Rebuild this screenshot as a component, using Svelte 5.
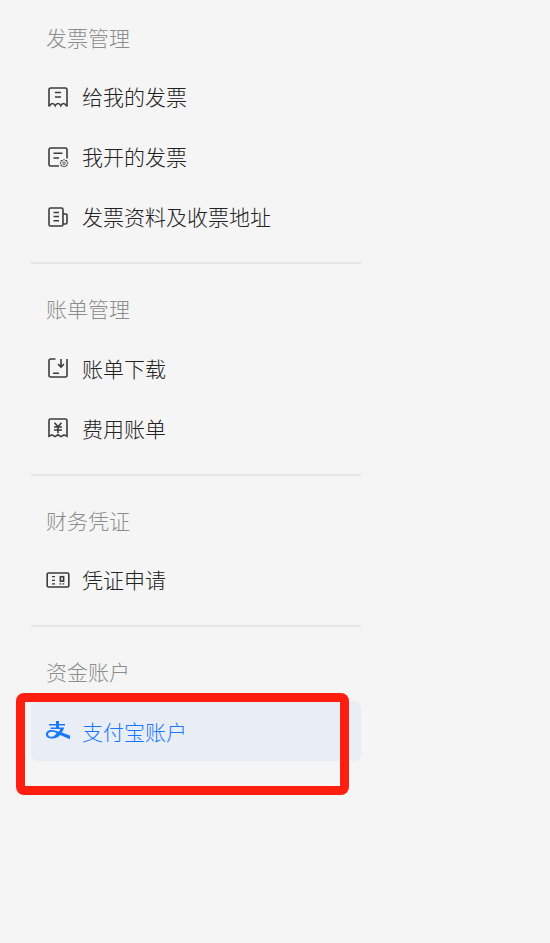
<script>
  const groups = [
    { title: '发票管理', items: [
      { icon: 'received', label: '给我的发票' },
      { icon: 'issued', label: '我开的发票' },
      { icon: 'address', label: '发票资料及收票地址' }
    ] },
    { title: '账单管理', items: [
      { icon: 'download', label: '账单下载' },
      { icon: 'fee', label: '费用账单' }
    ] },
    { title: '财务凭证', items: [{ icon: 'voucher', label: '凭证申请' }] },
    { title: '资金账户', items: [{ icon: 'alipay', label: '支付宝账户', active: true }] }
  ];
</script>

<main>
  <nav>
    {#each groups as group}
      <section>
        <h2>{group.title}</h2>
        <ul>
          {#each group.items as item}
            <li class:active={item.active}>
              <svg viewBox="0 0 24 24" aria-hidden="true">
                {#if item.icon === 'received'}
                  <path d="M3 21V4.7Q3 3 4.7 3h14.6Q21 3 21 4.7V21M9 7.5h6M9 12h6" />
                  <path d="M2.2 20.8h1.6q1-2.4 2.7-2.4t2.7 2.4q1-2.4 2.8-2.4t2.8 2.4q1-2.4 2.7-2.4t2.7 2.4h1.6" stroke-width="1.5" />
                {:else if item.icon === 'issued'}
                  <path d="M21 13.5V4.7Q21 3 19.3 3H4.7Q3 3 3 4.7v14.6Q3 21 4.7 21h8.3M7.5 8.2h9M7.5 13h5.5" />
                  <path d="m18 14.3 1.2 1.2h1.7v1.7L22 18.2l-1.1 1.1V21h-1.7L18 22l-1.2-1h-1.7v-1.7L14 18.2l1.1-1V15.500h1.7z" stroke-width=".9" />
                  <circle cx="18" cy="18.2" r="1.3" stroke-width=".8" />
                {:else if item.icon === 'address'}
                  <path d="M4.500 3h11Q17 3 17 4.500v15q0 1.500-1.500 1.500h-11Q3 21 3 19.500v-15Q3 3 4.500 3zM17 9h3q1 0 1 1v7.500q0 1.500-1.500 1.500H17M7.500 7.500h5.500M7.500 11.500h5.500M7.500 15.800h5.500" />
                {:else if item.icon === 'download'}
                  <path d="M9.5 3H4.7Q3 3 3 4.7v14.6Q3 21 4.7 21h14.6q1.700 0 1.700-1.700V3M15 3v8M12 8l3 3 3-3M7 17.300h6" />
                {:else if item.icon === 'fee'}
                  <path d="M3 20.200V4.500Q3 3 4.500 3h15Q21 3 21 4.500v15.700l-3-1.400-3 1.800-3-1.800-3 1.800-3-1.800z" />
                  <path d="m8.500 6.800 3.500 4 3.500-4M8 11h8M8 14h8M12 10.500v6.700" />
                {:else if item.icon === 'voucher'}
                  <rect x="1.200" y="5" width="21.600" height="14" rx="1.200" stroke-width="1.600" />
                  <path d="M6 8.700h3M6 12.300h3M6 15.900h3M13.500 15.900h1.700M16.500 15.900h1.700" stroke-width="1.300" />
                  <rect x="14.400" y="8.700" width="3.200" height="4.500" stroke-width="1.600" />
                {:else}
                  <path d="M10 2h3v3h6v1.500h-6v2h5.200c-.6 2-1.400 3.700-2.400 5.100l8.200 2.900v3.700l-9.800-4.300c-2 2.100-4.400 3.600-7.700 3.600C2.500 19.500 0 18 0 15.400c0-2.700 2.200-4.300 5.200-4.300 2.400 0 4.800.7 7.600 1.600.8-.9 1.300-1.800 1.600-2.700H4.500V8.500H10v-2H3V5h7zM10.700 14.100c-2-.9-3.500-1.400-5.100-1.400-2.200 0-3.500 1-3.500 2.500 0 1.600 1.400 2.600 3.500 2.600 2 0 3.700-1.300 5.100-3.700z" fill="currentColor" fill-rule="evenodd" stroke="none" />
                {/if}
              </svg>
              <span>{item.label}</span>
            </li>
          {/each}
        </ul>
      </section>
    {/each}
  </nav>
  <div class="highlight"></div>
</main>

<style>
  :global(body) {
    background: #f5f5f5;
  }
  main {
    position: relative;
    box-sizing: border-box;
    width: 550px;
    height: 943px;
    padding: 6.5px 0 0 31px;
    overflow: hidden;
    background: #f5f5f5;
    font-family: "Noto Sans CJK SC", sans-serif;
    font-size: 21px;
    font-weight: 300;
  }
  nav {
    width: 330px;
  }
  section + section {
    margin-top: 15.5px;
    padding-top: 14px;
    border-top: 2px solid #e6e6e6;
  }
  h2 {
    height: 60px;
    margin: 0;
    padding-left: 15px;
    color: #8c8c8c;
    font-size: 21px;
    font-weight: 300;
    line-height: 60px;
  }
  ul {
    margin: 0;
    padding: 0;
    list-style: none;
  }
  li {
    display: flex;
    align-items: center;
    gap: 12px;
    height: 60px;
    padding-left: 15px;
    border-radius: 6px;
    color: #222;
    line-height: 58px;
    white-space: nowrap;
  }
  li span {
    padding-bottom: 1px;
  }
  li.active {
    background: #e9eef6;
    color: #1677ff;
  }
  svg {
    width: 24px;
    height: 24px;
    flex: none;
    fill: none;
    stroke: currentColor;
    stroke-width: 1.6;
  }
  li:not(.active) svg {
    color: #3c3c3c;
  }
  .highlight {
    position: absolute;
    left: 15.5px;
    top: 692.5px;
    box-sizing: border-box;
    width: 333px;
    height: 102px;
    border: 9px solid #ff1f10;
    border-radius: 8px;
  }
</style>
